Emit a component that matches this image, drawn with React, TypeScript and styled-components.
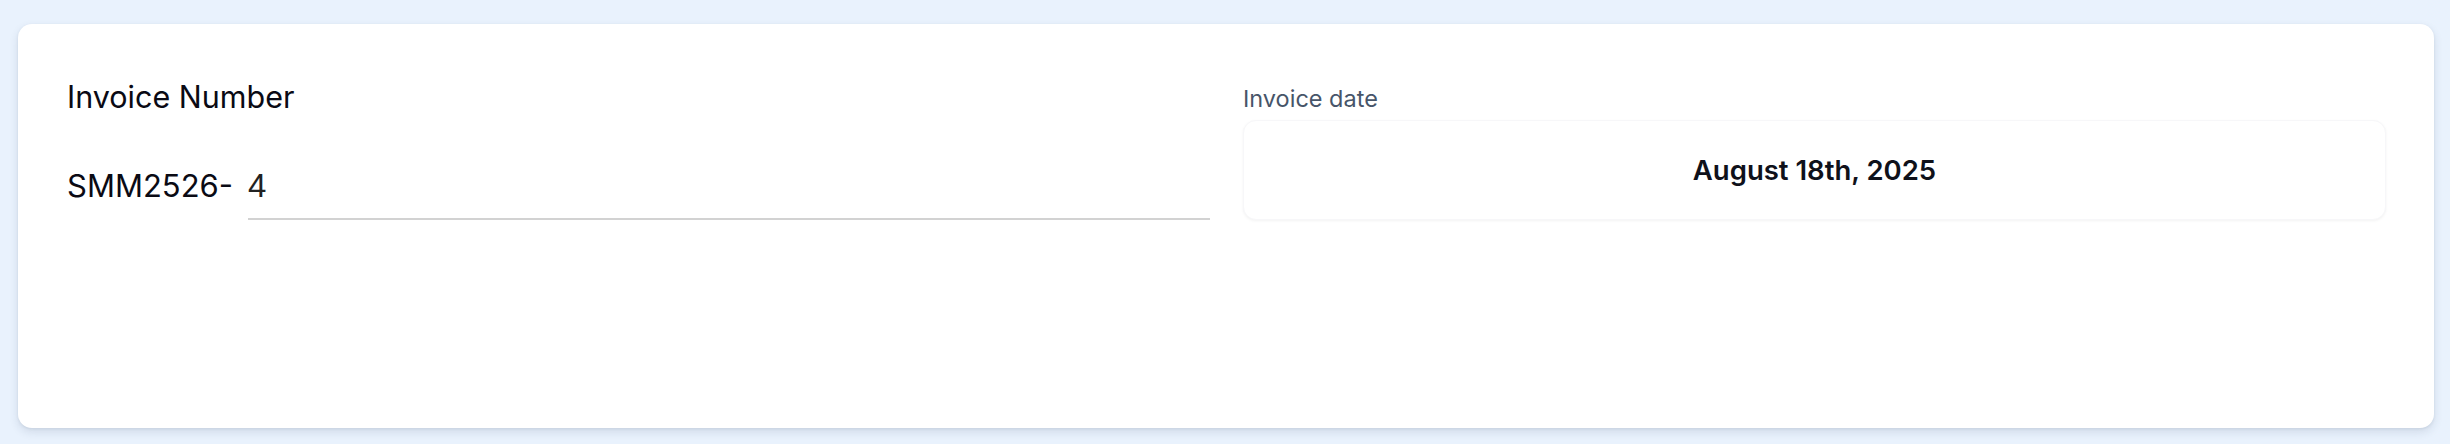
import * as React from 'react'
import styled, { createGlobalStyle } from 'styled-components'

const GlobalStyle = createGlobalStyle`
  html, body {
    margin: 0;
    padding: 0;
    background: #e9f2fd;
    font-family: 'Inter', 'Noto Sans', sans-serif;
  }
  * {
    box-sizing: border-box;
  }
`

const Page = styled.div`
  padding: 24px 16px 16px 18px;
`

const Card = styled.div`
  height: 404px;
  background: #ffffff;
  border-radius: 14px;
  padding: 49px 48px 0 49px;
  box-shadow: 0 4px 10px rgba(30, 50, 80, 0.12), 0 1px 3px rgba(30, 50, 80, 0.08);
`

const Columns = styled.div`
  display: grid;
  grid-template-columns: 1fr 1fr;
  column-gap: 33px;
  align-items: end;
`

const Field = styled.div`
  display: flex;
  flex-direction: column;
  min-width: 0;
`

const Title = styled.div`
  font-size: 30.5px;
  line-height: 47px;
  color: #0a0a14;
  margin-bottom: 48px;
`

const NumberRow = styled.div`
  display: flex;
  align-items: baseline;
  gap: 15px;
`

const Prefix = styled.span`
  font-size: 31px;
  line-height: 1;
  color: #0a0a14;
  white-space: nowrap;
`

const NumberInput = styled.input`
  flex: 1;
  min-width: 0;
  height: 52px;
  padding: 0 0 14px 0;
  border: none;
  border-bottom: 2px solid #d2d2d2;
  outline: none;
  background: transparent;
  font-family: 'Liberation Sans', Arial, sans-serif;
  font-size: 33px;
  color: #222222;
`

const Label = styled.div`
  font-size: 23.5px;
  line-height: 33px;
  color: #475569;
  margin-bottom: 5px;
`

const DateBox = styled.div`
  height: 100px;
  display: flex;
  align-items: center;
  justify-content: center;
  background: #ffffff;
  border: 1px solid #f7f7f9;
  border-radius: 13px;
  box-shadow: 0 1px 3px rgba(0, 0, 0, 0.05);
  font-size: 27.5px;
  font-weight: 600;
  color: #0f111a;
`

export default function App() {
  return (
    <>
      <GlobalStyle />
      <Page>
        <Card>
          <Columns>
            <Field>
              <Title>Invoice Number</Title>
              <NumberRow>
                <Prefix>SMM2526-</Prefix>
                <NumberInput defaultValue="4" />
              </NumberRow>
            </Field>
            <Field>
              <Label>Invoice date</Label>
              <DateBox>August 18th, 2025</DateBox>
            </Field>
          </Columns>
        </Card>
      </Page>
    </>
  )
}
